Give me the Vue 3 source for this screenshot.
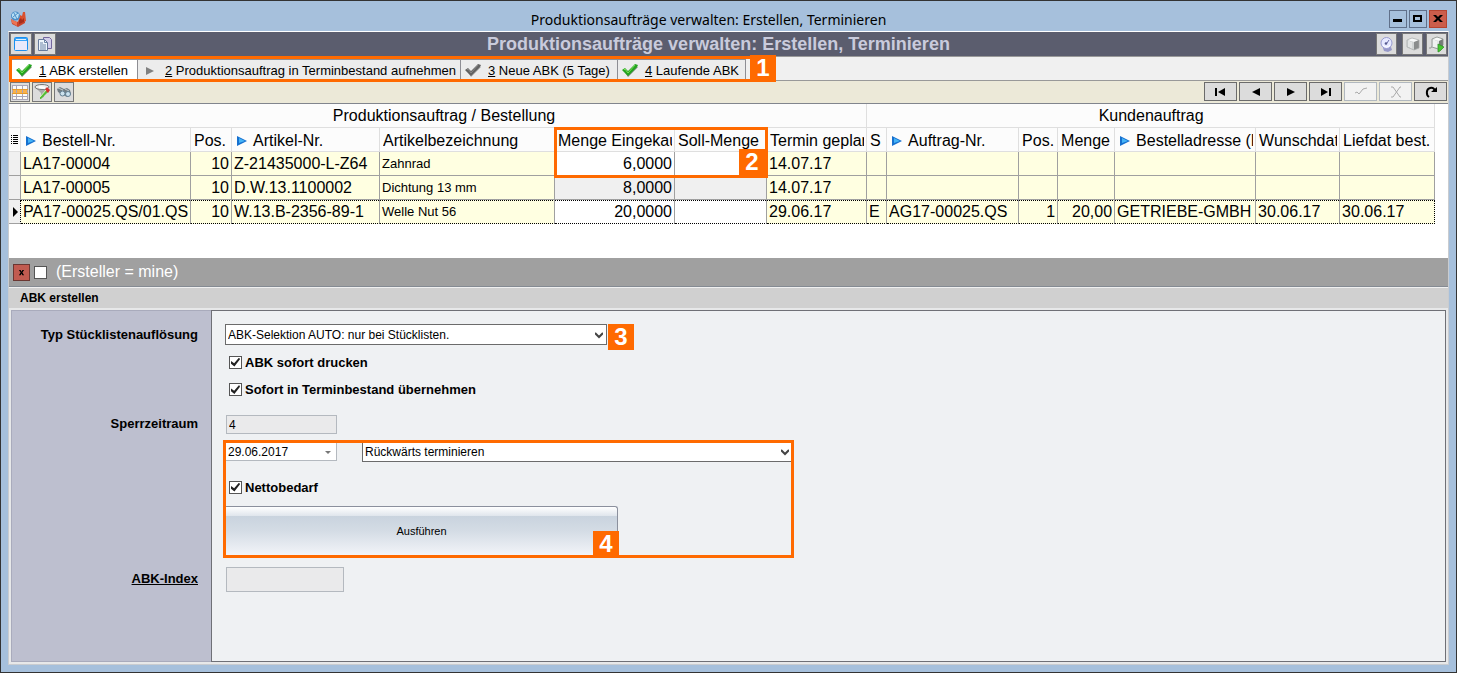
<script setup>
import { ref } from 'vue'

const tabs = [
  { key: '1', label: 'ABK erstellen', icon: 'green', width: 'w1' },
  { key: '2', label: 'Produktionsauftrag in Terminbestand aufnehmen', icon: 'arrow', width: 'w2' },
  { key: '3', label: 'Neue ABK (5 Tage)', icon: 'gray', width: 'w3' },
  { key: '4', label: 'Laufende ABK', icon: 'green', width: 'w4' },
]
const active = ref('1')

const widths = [12, 170, 41, 148, 175, 120, 92, 100, 20, 132, 39, 57, 141, 84, 95]
const columns = [
  { label: 'Bestell-Nr.', sort: true },
  { label: 'Pos.', num: true },
  { label: 'Artikel-Nr.', sort: true },
  { label: 'Artikelbezeichnung', small: true },
  { label: 'Menge Eingekau', num: true, edit: true },
  { label: 'Soll-Menge', num: true, edit: true },
  { label: 'Termin geplan' },
  { label: 'S' },
  { label: 'Auftrag-Nr.', sort: true },
  { label: 'Pos.', num: true },
  { label: 'Menge', num: true },
  { label: 'Bestelladresse (K', sort: true },
  { label: 'Wunschdat' },
  { label: 'Liefdat best.' },
]
const rows = [
  ['LA17-00004', '10', 'Z-21435000-L-Z64', 'Zahnrad', '6,0000', '', '14.07.17', '', '', '', '', '', '', ''],
  ['LA17-00005', '10', 'D.W.13.1100002', 'Dichtung 13 mm', '8,0000', '', '14.07.17', '', '', '', '', '', '', ''],
  ['PA17-00025.QS/01.QS', '10', 'W.13.B-2356-89-1', 'Welle Nut 56', '20,0000', '', '29.06.17', 'E', 'AG17-00025.QS', '1', '20,00', 'GETRIEBE-GMBH', '30.06.17', '30.06.17'],
]
const selected = 2

const filterOn = ref(false)
const printNow = ref(true)
const takeOver = ref(true)
const netto = ref(true)
const lockPeriod = ref('4')
const date = ref('29.06.2017')
const abkIndex = ref('')
</script>

<template>
  <div class="window">
    <header class="titlebar">
      <svg class="app-icon" viewBox="0 0 16 16" width="16" height="16" aria-hidden="true">
        <path d="M1 8l6 3 8-4v5l-7 4-6-3z" fill="#c8432c" />
        <path d="M1 8l6 3v4l-5-3z" fill="#ec7453" />
        <path d="M10 4l2 1 1-4h2l1 9-4 2-4-1z" fill="#d9502f" />
        <path d="M9 9l2-2 1 2 2-2v4l-5 2z" fill="#a72d1b" />
        <circle cx="5.500" cy="5" r="4.500" fill="#4d8fc8" />
        <path d="M2 3l3-2 4 2-1 4-3 1-3-2z" fill="#b7def4" />
        <path d="M3 6l5-4M4 2l3 6" stroke="#4d8fc8" />
      </svg>
      <span class="window-title">Produktionsaufträge verwalten: Erstellen, Terminieren</span>
      <div class="window-buttons">
        <button type="button" aria-label="Minimieren"><svg viewBox="0 0 16 16"><path d="M3 8h9v3H3z" /></svg></button>
        <button type="button" aria-label="Maximieren"><svg viewBox="0 0 16 16"><path fill-rule="evenodd" d="M3 4h9v7H3zM5 6v3h5V6z" /></svg></button>
        <button type="button" class="close" aria-label="Schließen"><svg viewBox="0 0 16 16"><path d="M3 4h3l2 2 2-2h3L9.500 7.500 13 11h-3L8 9l-2 2H3l3.500-3.500z" /></svg></button>
      </div>
    </header>

    <main class="frame">
      <div class="headbar">
        <div class="head-group">
          <button type="button" class="tool head-tool" aria-label="Fenster">
            <svg viewBox="0 0 18 18" width="18" height="18"><rect x="2.500" y="2.500" width="13" height="13" rx="1" fill="#e9e9fb" stroke="#1b8ff0" /><path d="M3 3h12v3H3z" fill="#38a4f8" /><path d="M4 4h10v1H4z" fill="#dff1ff" /></svg>
          </button>
          <button type="button" class="tool head-tool" aria-label="Kopieren">
            <svg viewBox="0 0 18 18" width="18" height="18"><path d="M7.500 2.500h6l2 2v9h-8z" fill="#d2cdea" stroke="#73669d" /><path d="M2.500 4.500h6l3 3v8h-9z" fill="#edf4fa" stroke="#667a9c" /><path d="M8.500 4.500v3h3M4 8h3M4 10h6M4 12h6M4 14h6" fill="none" stroke="#6f86a9" /></svg>
          </button>
        </div>
        <h1>Produktionsaufträge verwalten: Erstellen, Terminieren</h1>
        <div class="head-group end">
          <button type="button" class="tool head-tool apart" aria-label="Signal">
            <svg viewBox="0 0 18 18" width="18" height="18"><path d="M5 13l8-1 1 3-4 2-4-1z" fill="#9698c8" /><circle cx="8.500" cy="8" r="5.500" fill="#e6e9ff" stroke="#989bd0" /><path d="M5 10a4 4 0 0 0 7 0" fill="none" stroke="#fff" /><path d="M9 8l2-3" stroke="#6a6da8" /><circle cx="8" cy="8.500" r="1.300" fill="#555a8f" /></svg>
          </button>
          <button type="button" class="tool head-tool" aria-label="Modul">
            <svg viewBox="0 0 18 18" width="18" height="18"><path d="M3 5l5-2 7 2-5 2z" fill="#f7f9f9" /><path d="M3 5l7 2v8l-7-3z" fill="#d0d4d4" /><path d="M10 7l5-2v8l-5 2z" fill="#8a8d8d" /><path d="M5 6v6M7 7v7" stroke="#f4f4f4" /><path d="M3 5l5-2 7 2v8l-5 2-7-3z" fill="none" stroke="#a3a7a7" stroke-width=".7" /></svg>
          </button>
          <button type="button" class="tool head-tool" aria-label="Modul starten">
            <svg viewBox="0 0 18 18" width="18" height="18"><path d="M4 4l5-2 6 2-4 2z" fill="#f8fafa" /><path d="M4 4l7 2v8l-7-2z" fill="#e2e5e4" /><path d="M11 6l4-2v8l-4 2z" fill="#747b76" /><path d="M6 5v7M8 6v6" fill="none" stroke="#fff" /><path d="M1 13h2l1-2V4l5-2 6 2v6M4 12l6 2" fill="none" stroke="#858b88" stroke-width=".8" /><path d="M10 9l6 3-4 4-2 1z" fill="#48c730" stroke="#278d20" stroke-width=".7" /></svg>
          </button>
        </div>
      </div>

      <nav class="tabrow">
        <div class="tabs" role="tablist">
          <button v-for="t in tabs" :key="t.key" type="button" role="tab" class="tab" :class="[t.width, { active: active === t.key }]" :aria-selected="active === t.key" @click="active = t.key">
            <svg v-if="t.icon === 'arrow'" class="tab-icon" viewBox="0 0 16 16"><path d="M4 4l8 4-8 4z" fill="#808080" /></svg>
            <svg v-else class="tab-icon" :class="t.icon" viewBox="0 0 16 16">
              <path class="shade" d="M2 8l4 6 10-10-3-1-7 7-3-3z" />
              <path class="body" d="M0 7l3-2 3 3 7-7 3 1-1 2-9 9z" />
              <path class="shine" d="M2 7l1-1 3 4 7-8" />
            </svg>
            <span><u>{{ t.key }}</u> {{ t.label }}</span>
          </button>
          <span class="badge badge-tabs">1</span>
        </div>
      </nav>

      <div class="toolbar">
        <div class="tools">
          <button type="button" class="tool" aria-label="Tabelle"><svg viewBox="0 0 18 18" width="18" height="18"><path d="M1 2h16v14H1z" fill="#fbfaf8" /><path d="M1 6h16v5H1z" fill="#f9b04a" /><path d="M1 2.500h16M1 13.500h16M1 16.500h16M1.500 2v14M5.500 2v14M11.500 2v14M16.500 2v14" stroke="#a9a6b8" fill="none" /><path d="M1 6.500h16M1 10.500h16" stroke="#e59a2d" /></svg></button>
          <button type="button" class="tool" aria-label="Filter"><svg viewBox="0 0 18 18" width="18" height="18"><path d="M2 4l6 6v5l3-1v-4l5-6z" fill="#aaa" /><ellipse cx="9" cy="4" rx="7" ry="2.500" fill="#eee" stroke="#777" /><path d="M6 4l6 1" stroke="#fff" stroke-width="2" /><path d="M7 14l6-7 2 2-7 7H7z" fill="#57bc36" /><path d="M12 7l2-3 3 3-2 3z" fill="#d62e2e" /><path d="M7 14l6-7" stroke="#d5f7be" /></svg></button>
          <button type="button" class="tool" aria-label="Suchen"><svg viewBox="0 0 18 18" width="18" height="18"><path d="M2 6l3-2 4 2 3-1 3 2 1 4-4 3-4-2-5-3z" fill="#737d82" /><path d="M3 5l5 2-2 3M10 6l4 2" fill="none" stroke="#c1cbd0" /><circle cx="7.500" cy="10.500" r="2.500" fill="#cce1ed" stroke="#627f92" /><circle cx="13" cy="11" r="2.500" fill="#cbe3f1" stroke="#627f92" /></svg></button>
        </div>
        <div class="navigator">
          <button type="button" aria-label="Erster"><svg viewBox="0 0 16 16"><path d="M2 4h2v8H2zM12 4v8L5 8z" /></svg></button>
          <button type="button" aria-label="Vorheriger"><svg viewBox="0 0 16 16"><path d="M12 4v8L4 8z" /></svg></button>
          <button type="button" aria-label="Nächster"><svg viewBox="0 0 16 16"><path d="M4 4v8l8-4z" /></svg></button>
          <button type="button" aria-label="Letzter"><svg viewBox="0 0 16 16"><path d="M3 4v8l7-4zM11 4h2v8h-2z" /></svg></button>
          <button type="button" disabled aria-label="Speichern"><svg viewBox="0 0 16 16"><path class="line" d="M2 9l2-1 2 2 4-5 4-1" /></svg></button>
          <button type="button" disabled aria-label="Verwerfen"><svg viewBox="0 0 16 16"><path class="line" d="M3 3h2l7 10h1M13 3h-1L5 13H3" /></svg></button>
          <button type="button" aria-label="Aktualisieren"><svg viewBox="0 0 16 16"><path class="turn" d="M6 13C3 11 3 5 7 4c3-1 5 1 5 4" /><path d="M8 8h6V3z" /></svg></button>
        </div>
      </div>

      <section class="grid">
        <table>
          <colgroup>
            <col v-for="(w, i) in widths" :key="i" :style="{ width: w + 'px' }" />
          </colgroup>
          <thead>
            <tr class="bands">
              <th></th>
              <th colspan="7" scope="colgroup">Produktionsauftrag / Bestellung</th>
              <th colspan="7" scope="colgroup">Kundenauftrag</th>
            </tr>
            <tr>
              <th class="indicator"><svg viewBox="0 0 10 12" width="10" height="12"><path d="M2 1h1v1H2zM4 1h5v1H4zM2 3h1v1H2zM4 3h5v1H4zM2 5h1v1H2zM4 5h5v1H4zM2 7h1v1H2zM4 7h5v1H4zM2 9h1v1H2zM4 9h5v1H4z" /></svg></th>
              <th v-for="(c, i) in columns" :key="i" scope="col">
                <div class="heading"><svg v-if="c.sort" class="sort" viewBox="0 0 10 10"><path d="M0 0l10 5-10 5z" fill="#1670cf" /><path d="M2 2l6 3-6 2z" fill="#45b3f6" /></svg>{{ c.label }}</div>
              </th>
            </tr>
          </thead>
          <tbody>
            <tr v-for="(r, ri) in rows" :key="ri" :class="{ selected: ri === selected, locked: ri === 1 }">
              <td class="indicator"><svg v-if="ri === selected" viewBox="0 0 10 12" width="10" height="12"><path d="M4 1l5 5-5 5z" /></svg></td>
              <td v-for="(v, ci) in r" :key="ci" :class="{ num: columns[ci].num, small: columns[ci].small, edit: columns[ci].edit }">{{ v }}</td>
            </tr>
          </tbody>
        </table>
        <div class="mark mark-grid"><span class="badge">2</span></div>
      </section>

      <div class="filterbar">
        <button type="button" aria-label="Filter löschen"><svg viewBox="0 0 8 8" width="7" height="7"><path d="M1 1h2l1 2 1-2h2L5 4l2 3H5L4 5 3 7H1l2-3z" /></svg></button>
        <label><input v-model="filterOn" type="checkbox" class="check" />(Ersteller = mine)</label>
      </div>

      <section class="panel">
        <h2>ABK erstellen</h2>
        <form class="form" @submit.prevent>
          <div class="column captions">
            <label class="row-type" for="type">Typ Stücklistenauflösung</label>
            <label class="row-lock" for="lock">Sperrzeitraum</label>
            <label class="row-index" for="index"><u>ABK-Index</u></label>
          </div>
          <div class="column fields">
            <div class="row-type">
              <span class="select type-select">
                <select id="type"><option>ABK-Selektion AUTO: nur bei Stücklisten.</option></select>
                <svg viewBox="0 0 8 8"><path d="M0 2l4 4 4-4" /></svg>
              </span>
              <span class="badge badge-type">3</span>
            </div>
            <label class="check-label row-print"><input v-model="printNow" type="checkbox" class="check" />ABK sofort drucken</label>
            <label class="check-label row-take"><input v-model="takeOver" type="checkbox" class="check" />Sofort in Terminbestand übernehmen</label>
            <div class="row-lock"><input id="lock" v-model="lockPeriod" type="text" class="box lock" readonly /></div>
            <div class="schedule">
              <div class="schedule-line">
                <span class="date"><input v-model="date" type="text" aria-label="Datum" /><svg viewBox="0 0 6 4"><path d="M0 0h6L3 3z" /></svg></span>
                <span class="select direction">
                  <select aria-label="Terminierung"><option>Rückwärts terminieren</option></select>
                  <svg viewBox="0 0 8 8"><path d="M0 2l4 4 4-4" /></svg>
                </span>
              </div>
              <label class="check-label"><input v-model="netto" type="checkbox" class="check" />Nettobedarf</label>
              <div class="run"><button type="submit">Ausführen</button><span class="badge badge-run">4</span></div>
            </div>
            <div class="row-index"><input id="index" v-model="abkIndex" type="text" class="box index" readonly /></div>
          </div>
        </form>
      </section>
    </main>
  </div>
</template>

<style>
body {
  margin: 0;
}
</style>

<style scoped>
* {
  box-sizing: border-box;
}
.window {
  display: flex;
  flex-direction: column;
  min-height: 100vh;
  padding: 0 7px 7px;
  border: 1px solid #333;
  background: #a6c0dc;
  color: #000;
  font: 13px "Liberation Sans", Arial, sans-serif;
}
button,
input,
select {
  margin: 0;
  padding: 0;
  border-radius: 0;
  font: inherit;
  color: inherit;
}
svg {
  display: block;
  flex: none;
}
.titlebar {
  display: grid;
  grid-template-columns: 20px 1fr 60px;
  align-items: center;
  height: 30px;
  padding: 6px 2px 0;
}
.window-title {
  font: 14px "Noto Sans", sans-serif;
  text-align: center;
}
.window-buttons {
  display: flex;
  justify-content: flex-end;
  gap: 2px;
}
.window-buttons button {
  width: 18px;
  height: 18px;
  border: 1px solid #60708a;
  background: #a6c0dc;
}
.window-buttons .close {
  border-color: #b6432f;
  background: #cb5d4b;
}
.frame {
  display: flex;
  flex: 1;
  flex-direction: column;
  border: 1px solid #c9ccd0;
  border-top-color: #fff;
  background: #f0f0f0;
}
.headbar {
  display: grid;
  grid-template-columns: 70px 1fr 90px;
  align-items: center;
  height: 24px;
  padding: 0 1px;
  background: #5b5d6e;
}
h1 {
  margin: 0;
  color: #c9cbdc;
  font-size: 18px;
  line-height: 22px;
  text-align: center;
  white-space: nowrap;
}
.head-group {
  display: flex;
  gap: 2px;
}
.end {
  justify-content: flex-end;
  gap: 3px;
}
.tool {
  display: flex;
  align-items: center;
  justify-content: center;
  width: 20px;
  height: 20px;
  border: 1px solid #777;
  background: #dcdcdc;
}
.head-tool {
  width: 22px;
  height: 22px;
}
.end .head-tool {
  width: 21px;
}
.end .apart {
  margin-right: 2px;
}
.tabrow {
  display: flex;
  height: 25px;
  border-top: 1px solid #999;
  border-bottom: 1px solid #999;
  background: #f0f0f0;
}
.tabs {
  position: relative;
  display: flex;
  height: 26px;
  margin-top: -1px;
  border: 3px solid #ff6a00;
  background: #f0f0f0;
}
.tab {
  display: flex;
  align-items: center;
  gap: 7px;
  padding: 2px 0 0 4px;
  border: solid #8e8e94;
  border-width: 1px 1px 0 0;
  background: #ececec;
  white-space: nowrap;
}
.active {
  background: #fff;
}
.w1 {
  width: 126px;
}
.w2 {
  width: 323px;
}
.w3 {
  width: 157px;
}
.w4 {
  width: 128px;
  margin-right: 27px;
}
.tab-icon {
  width: 16px;
  height: 16px;
}
.green .body {
  fill: #24a420;
}
.green .shade {
  fill: #77877a;
}
.green .shine {
  fill: none;
  stroke: #79df57;
}
.gray .body {
  fill: #626262;
}
.gray .shade {
  fill: #aaa;
}
.gray .shine {
  fill: none;
  stroke: #888;
}
.badge {
  display: block;
  width: 26px;
  height: 26px;
  background: #ff6a00;
  color: #fff;
  font: bold 24px/26px "Liberation Sans", Arial, sans-serif;
  text-align: center;
}
.badge-tabs {
  position: absolute;
  top: -4px;
  right: -3px;
}
.toolbar {
  display: flex;
  justify-content: space-between;
  height: 22px;
  padding: 1px;
  background: #ece9d8;
}
.tools,
.navigator {
  display: flex;
  gap: 2px;
}
.navigator button {
  display: flex;
  align-items: center;
  justify-content: center;
  width: 33px;
  height: 19px;
  border: 1px solid #6b6b6b;
  background: #dcdcdc;
}
.navigator svg {
  width: 16px;
  height: 16px;
}
.navigator button:disabled {
  border-color: #b1b8bf;
  background: #f2f2f2;
}
.line {
  fill: none;
  stroke: #aaa;
}
.turn {
  fill: none;
  stroke: #000;
  stroke-width: 2;
}
.grid {
  position: relative;
  min-height: 155px;
  border-top: 1px solid #81858d;
  background: #fff;
}
table {
  width: 1426px;
  table-layout: fixed;
  border-collapse: separate;
  border-spacing: 0;
  font-size: 16px;
}
th,
td {
  height: 24px;
  padding: 0 2px;
  overflow: hidden;
  border: solid #a0a0a0;
  border-width: 0 1px 1px 0;
  line-height: 23px;
  text-align: left;
  white-space: nowrap;
}
th {
  padding: 0 2px 0 3px;
  border-color: #dfdfdf;
  background: #fcfcfc;
  font-weight: normal;
}
.bands th {
  text-align: center;
}
.heading {
  height: 23px;
  overflow: hidden;
  line-height: 25px;
}
td {
  background: #ffffe1;
}
.indicator {
  padding: 0;
  background: #f0f0f0;
}
th.indicator {
  background: #fcfcfc;
}
.sort {
  display: inline-block;
  width: 10px;
  height: 10px;
  margin: 0 6px 0 2px;
}
.num {
  text-align: right;
}
.small {
  font-size: 13px;
}
.edit {
  background: #fff;
}
.locked .edit {
  background: #f0f0f0;
}
.selected td:not(.indicator) {
  border-bottom: 1px dotted #000;
  background-image: linear-gradient(to right, #000 50%, transparent 50%);
  background-repeat: repeat-x;
  background-size: 2px 1px;
}
.selected td:last-child {
  border-right: 1px dotted #000;
}
.selected .indicator {
  border-right: 1px dotted #000;
}
.mark {
  position: absolute;
  border: 3px solid #ff6a00;
}
.mark-grid {
  top: 23px;
  left: 545px;
  display: flex;
  align-items: flex-end;
  justify-content: flex-end;
  width: 214px;
  height: 51px;
}
.filterbar {
  display: flex;
  align-items: center;
  gap: 4px;
  height: 29px;
  padding-left: 4px;
  border-bottom: 1px solid #858b93;
  background: #a0a0a0;
  color: #fff;
  font-size: 16px;
}
.filterbar button {
  display: flex;
  align-items: center;
  justify-content: center;
  width: 17px;
  height: 17px;
  border: 1px solid #6b3732;
  background: #c15b50;
}
.filterbar label {
  display: flex;
  align-items: center;
  gap: 9px;
}
.check {
  display: flex;
  align-items: center;
  justify-content: center;
  width: 13px;
  height: 13px;
  border: 1px solid #555;
  background: #fff;
  appearance: none;
}
.check:checked::after {
  width: 9px;
  height: 9px;
  background: #222;
  clip-path: polygon(0 40%, 35% 65%, 90% 0, 100% 20%, 38% 100%, 0 70%);
  content: "";
}
.panel {
  display: flex;
  flex: 1;
  flex-direction: column;
  margin-top: 1px;
  background: #e7e8e9;
}
h2 {
  margin: 0 0 2px;
  padding-left: 11px;
  background: #d0d0d0;
  font-size: 12px;
  line-height: 20px;
}
.form {
  display: flex;
  flex: 1;
  margin: 0 2px 2px;
}
.column {
  display: grid;
  grid-template-rows: 27px 28px 27px 37px 118px 34px;
  align-content: start;
  padding-top: 10px;
  border: 1px solid #a9abbc;
}
.captions {
  width: 200px;
  padding-right: 13px;
  border-right: 0;
  background: #bdbfcf;
  font-weight: bold;
  text-align: right;
}
.fields {
  flex: 1;
  padding-left: 11px;
  border-color: #6f7076;
  background: #eff1f3;
}
.row-type {
  display: flex;
  grid-row: 1;
  align-items: center;
  gap: 1px;
}
.row-print {
  grid-row: 2;
}
.row-take {
  grid-row: 3;
}
.row-lock {
  display: flex;
  grid-row: 4;
  align-items: flex-end;
  padding-bottom: 6px;
}
.row-index {
  display: flex;
  grid-row: 6;
  align-items: flex-end;
}
.captions label {
  align-items: center;
  justify-content: flex-end;
}
.captions .row-lock {
  padding-top: 4px;
  padding-bottom: 0;
}
.captions .row-index {
  padding-top: 6px;
}
.fields .row-type {
  padding-left: 2px;
}
.fields .row-lock,
.fields .row-index {
  padding-left: 3px;
}
.select,
.date {
  position: relative;
  display: block;
}
.select select {
  display: block;
  width: 100%;
  height: 21px;
  padding-left: 2px;
  border: 1px solid #6b6b6b;
  background: #fff;
  font-size: 12px;
  appearance: none;
}
.select svg {
  position: absolute;
  top: 7px;
  right: 4px;
  width: 8px;
  height: 8px;
  fill: none;
  stroke: #444;
  stroke-width: 2;
  pointer-events: none;
}
.type-select {
  width: 382px;
}
.badge-type {
  align-self: flex-start;
  margin-top: 3px;
}
.check-label {
  display: flex;
  align-items: center;
  gap: 3px;
  padding-left: 6px;
  font-weight: bold;
}
.box {
  height: 19px;
  padding-left: 2px;
  border: 1px solid #b4b9bf;
  background: #eaeaeb;
  font-size: 12px;
}
.lock {
  width: 111px;
}
.index {
  width: 118px;
  height: 25px;
}
.schedule {
  grid-row: 5;
  width: 571px;
  border: 3px solid #ff6a00;
}
.schedule-line {
  display: flex;
  gap: 25px;
}
.date input {
  display: block;
  width: 111px;
  height: 18px;
  padding-left: 2px;
  border: solid #b4b9bf;
  border-width: 0 1px 1px 0;
  background: #fff;
  font-size: 12px;
}
.date svg {
  position: absolute;
  top: 8px;
  right: 6px;
  width: 6px;
  height: 4px;
  fill: #777;
}
.direction {
  flex: 1;
}
.direction select {
  height: 19px;
  border-width: 0 0 1px 1px;
}
.direction svg {
  top: 5px;
  right: 2px;
}
.schedule .check-label {
  height: 44px;
  padding: 6px 0 0 3px;
}
.run {
  display: flex;
  position: relative;
  width: 392px;
}
.run button {
  flex: 1;
  height: 49px;
  border: solid #8b909d;
  border-width: 1px 1px 0 0;
  border-radius: 0 3px 0 0;
  background: linear-gradient(#fff, #dfe5ec 9px, #c9d3de 9px, #d4dce5 24px, #f2f4f8);
  font-size: 11px;
}
.badge-run {
  position: absolute;
  right: -1px;
  bottom: -2px;
}
</style>
